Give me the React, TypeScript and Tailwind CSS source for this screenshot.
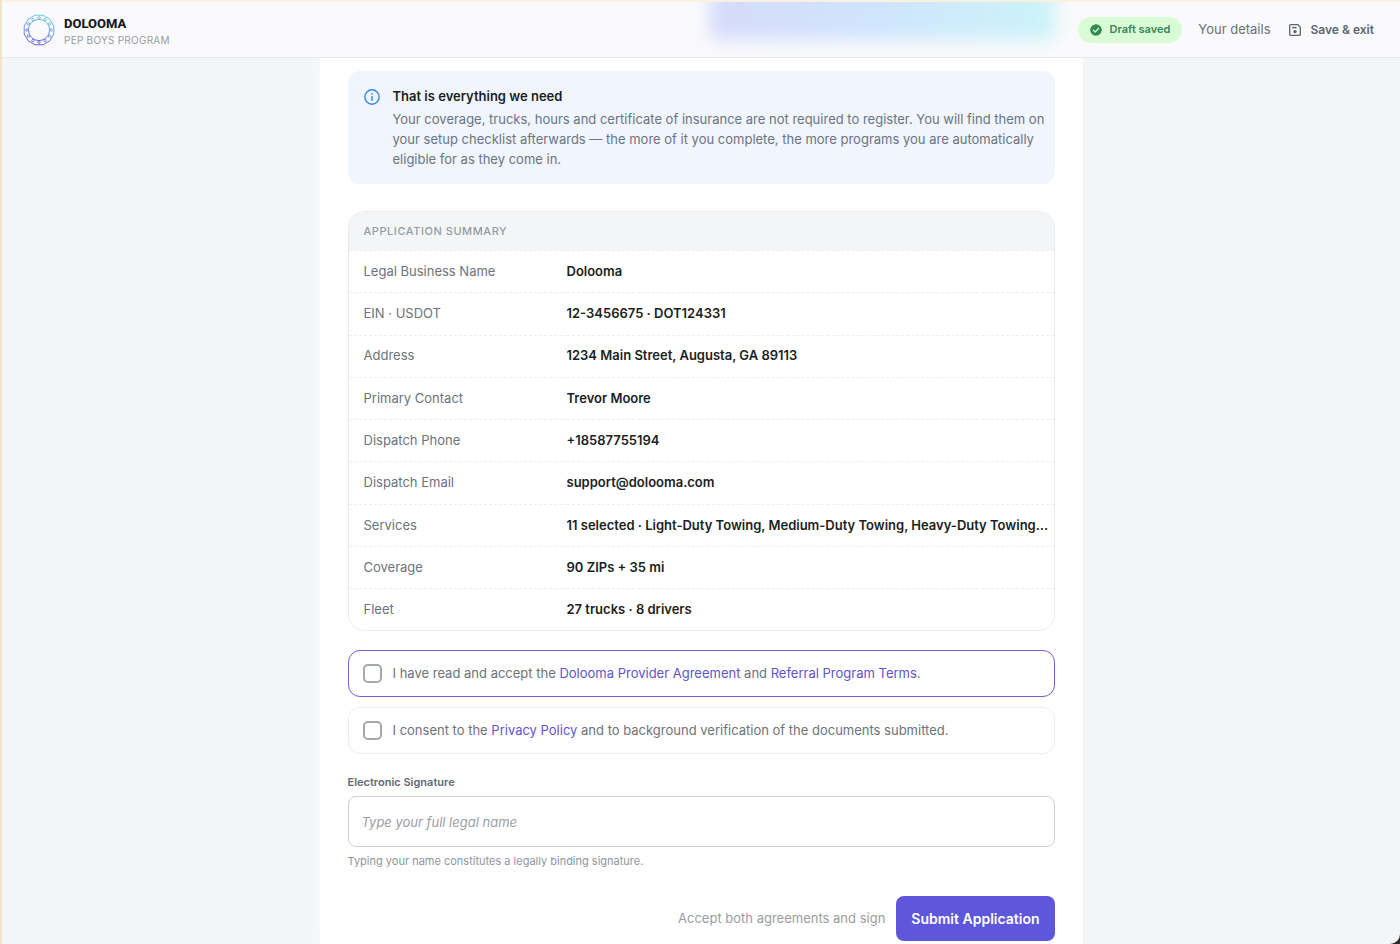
import { useState } from 'react'

const SUMMARY = [
  { label: 'Legal Business Name', value: 'Dolooma' },
  { label: 'EIN · USDOT', value: '12-3456675 · DOT124331' },
  { label: 'Address', value: '1234 Main Street, Augusta, GA 89113' },
  { label: 'Primary Contact', value: 'Trevor Moore' },
  { label: 'Dispatch Phone', value: '+18587755194' },
  { label: 'Dispatch Email', value: 'support@dolooma.com' },
  { label: 'Services', value: '11 selected · Light-Duty Towing, Medium-Duty Towing, Heavy-Duty Towing…' },
  { label: 'Coverage', value: '90 ZIPs + 35 mi' },
  { label: 'Fleet', value: '27 trucks · 8 drivers' }
]

const LOGO_DOTS = Array.from({ length: 12 }, (_, i) => {
  const angle = (i * Math.PI) / 6
  return { x: 16 + 12.2 * Math.cos(angle), y: 16 + 12.2 * Math.sin(angle) }
})

function Logo() {
  return (
    <svg viewBox="0 0 32 32" className="size-8" fill="none" stroke="url(#logo-gradient)" aria-hidden="true">
      <defs>
        <linearGradient id="logo-gradient" gradientUnits="userSpaceOnUse" x1="20" y1="0" x2="12" y2="32">
          <stop offset="0" stopColor="#67cfdd" />
          <stop offset="0.5" stopColor="#6f9be4" />
          <stop offset="1" stopColor="#6c4fd8" />
        </linearGradient>
      </defs>
      <path
        strokeWidth="1"
        d="M12 1.2h8l6.8 4L30.8 12v8l-4 6.8-6.8 4h-8l-6.8-4L1.2 20v-8l4-6.8z"
        strokeLinejoin="round"
      />
      <circle cx="16" cy="16" r="10.6" strokeWidth="1" />
      {LOGO_DOTS.map((dot, i) => (
        <circle key={i} cx={dot.x} cy={dot.y} r="1.2" strokeWidth="0.9" fill="#f9fafc" />
      ))}
    </svg>
  )
}

function CheckBadgeIcon() {
  return (
    <svg viewBox="0 0 12 12" className="size-3" aria-hidden="true">
      <circle cx="6" cy="6" r="5.8" fill="#2f8a54" />
      <path d="M3.3 6.1l1.9 1.9 3.5-3.7" fill="none" stroke="#d5fbd4" strokeWidth="1.3" strokeLinecap="round" strokeLinejoin="round" />
    </svg>
  )
}

function SaveIcon() {
  return (
    <svg viewBox="0 0 12 12" className="size-3" fill="none" stroke="currentColor" strokeWidth="1.3" strokeLinejoin="round" aria-hidden="true">
      <path d="M1.6.7h7.3l2.4 2.4v7.3a.9.9 0 0 1-.9.9H1.6a.9.9 0 0 1-.9-.9V1.6a.9.9 0 0 1 .9-.9z" />
      <path d="M3.2 3.6h4.4" strokeWidth="1.5" />
      <circle cx="6" cy="7.6" r="1.7" fill="currentColor" stroke="none" />
    </svg>
  )
}

function InfoIcon() {
  return (
    <svg viewBox="0 0 16 16" className="size-4 shrink-0" fill="none" stroke="#3488e8" strokeLinecap="round" aria-hidden="true">
      <circle cx="8" cy="8" r="7.2" strokeWidth="1.4" />
      <path d="M8 7.4v3.8" strokeWidth="1.5" />
      <circle cx="8" cy="4.8" r="0.9" fill="#3488e8" stroke="none" />
    </svg>
  )
}

function Header() {
  return (
    <header className="relative flex h-[58px] items-center justify-between overflow-hidden border-t-2 border-b border-t-[#fbf1df] border-b-[#e6e8ea] bg-[#fafafc] pr-[26px] pl-[21px]">
      {/* Banner showing through the frosted bar */}
      <div className="absolute inset-x-0 -top-8 mx-auto flex w-full max-w-[707px] justify-end">
        <div className="h-[70px] w-[345px] rounded-lg bg-linear-to-r from-[#d5dafb] via-[#cfe5fd] to-[#cbf3f8] blur-[9px]" />
      </div>
      <div className="relative flex items-center gap-[9px]">
        <Logo />
        <div className="pt-1">
          <div className="font-[Roboto,sans-serif] text-[13px] leading-[17px] font-extrabold text-[#171a1e]">DOLOOMA</div>
          <div className="text-[10px] leading-[17px] tracking-wide text-[#989ca1]">PEP BOYS PROGRAM</div>
        </div>
      </div>
      <div className="relative flex items-center text-[13px] text-[#687079]">
        <span className="flex h-[26px] items-center gap-2 rounded-full bg-[#d9fcd6] px-3 text-[11px] font-semibold text-[#35855a]">
          <CheckBadgeIcon />
          Draft saved
        </span>
        <span className="ml-4">Your details</span>
        <button type="button" className="ml-[18px] flex items-center gap-2.5 text-xs font-semibold text-[#5d6670]">
          <SaveIcon />
          Save &amp; exit
        </button>
      </div>
    </header>
  )
}

function SummaryCard() {
  return (
    <section className="mt-[27px] overflow-hidden rounded-2xl border border-[#e9ecee]">
      <h2 className="flex h-[38px] items-center bg-[#f3f5f7] px-[15px] text-[11px] font-medium tracking-wider text-[#949ba1]">
        APPLICATION SUMMARY
      </h2>
      <table className="h-[380px] w-full table-fixed border-collapse text-[13px]">
        <tbody>
          {SUMMARY.map((row) => (
            <tr key={row.label} className="border-t border-dashed border-[#eceef0]">
              <th scope="row" className="w-[218px] px-[15px] text-left font-normal text-[#6b737b]">
                {row.label}
              </th>
              <td className="truncate pr-1 font-semibold text-[#1b1e22]">{row.value}</td>
            </tr>
          ))}
        </tbody>
      </table>
    </section>
  )
}

const CHECKBOX = 'size-[19px] shrink-0 appearance-none rounded-[5px] border-2 border-[#a3a8ad] bg-white checked:border-[#5e56db] checked:bg-[#5e56db]'
const LINK = 'text-[#6053cf]'

export default function App() {
  const [accepted, setAccepted] = useState(false)
  const [consented, setConsented] = useState(false)
  const [signature, setSignature] = useState('')

  return (
    <div className="bg-[#2b2b2b] font-[Inter,'Liberation_Sans',sans-serif]">
      <div className="flex min-h-screen flex-col rounded-br-[10px] border-l-2 border-[#efe3cb] bg-[#f3f5f7]">
        <Header />
        <main className="mx-auto w-full max-w-[763px] flex-1 bg-white px-7 pt-[13px] shadow-[-6px_0_12px_rgba(255,255,255,0.35)]">
          {/* Info notice */}
          <div className="flex gap-[13px] rounded-xl bg-[#f0f5fe] pt-[14px] pr-2 pb-[15px] pl-4 text-[13px]">
            <div className="pt-1">
              <InfoIcon />
            </div>
            <div>
              <h3 className="leading-[22px] font-semibold text-[#1b1e22]">That is everything we need</h3>
              <p className="mt-0.5 leading-5 text-[#6b7480]">
                Your coverage, trucks, hours and certificate of insurance are not required to register. You will find them
                on your setup checklist afterwards — the more of it you complete, the more programs you are automatically
                eligible for as they come in.
              </p>
            </div>
          </div>

          <SummaryCard />

          {/* Agreements */}
          <div className="mt-[19px] space-y-[10px] text-[13px] text-[#6b737b]">
            <label className="flex h-[47px] items-center gap-[11px] rounded-xl border border-[#6d61cf] px-[14px]">
              <input type="checkbox" checked={accepted} onChange={(e) => setAccepted(e.target.checked)} className={CHECKBOX} />
              <span>
                I have read and accept the <a href="#agreement" className={LINK}>Dolooma Provider Agreement</a> and{' '}
                <a href="#terms" className={LINK}>Referral Program Terms</a>.
              </span>
            </label>
            <label className="flex h-[47px] items-center gap-[11px] rounded-xl border border-[#eceef0] px-[14px]">
              <input type="checkbox" checked={consented} onChange={(e) => setConsented(e.target.checked)} className={CHECKBOX} />
              <span>
                I consent to the <a href="#privacy" className={LINK}>Privacy Policy</a> and to background verification of the
                documents submitted.
              </span>
            </label>
          </div>

          {/* Signature */}
          <div className="mt-5">
            <label htmlFor="signature" className="block text-[11px] leading-4 font-semibold text-[#626b75]">
              Electronic Signature
            </label>
            <input
              id="signature"
              type="text"
              value={signature}
              onChange={(e) => setSignature(e.target.value)}
              placeholder="Type your full legal name"
              className="mt-[6px] h-[51px] w-full rounded-lg border border-[#cdd1d5] bg-white px-[13px] text-[13px] italic placeholder:text-[#999ea4]"
            />
            <p className="mt-[6px] text-[11px] leading-4 text-[#8f969c]">Typing your name constitutes a legally binding signature.</p>
          </div>

          <div className="mt-[27px] flex items-center justify-end gap-[11px]">
            <span className="text-[13px] text-[#989da3]">Accept both agreements and sign</span>
            <button type="submit" className="h-[45px] rounded-lg bg-[#5e56db] px-[15px] text-sm font-semibold text-white">
              Submit Application
            </button>
          </div>
        </main>
      </div>
    </div>
  )
}
